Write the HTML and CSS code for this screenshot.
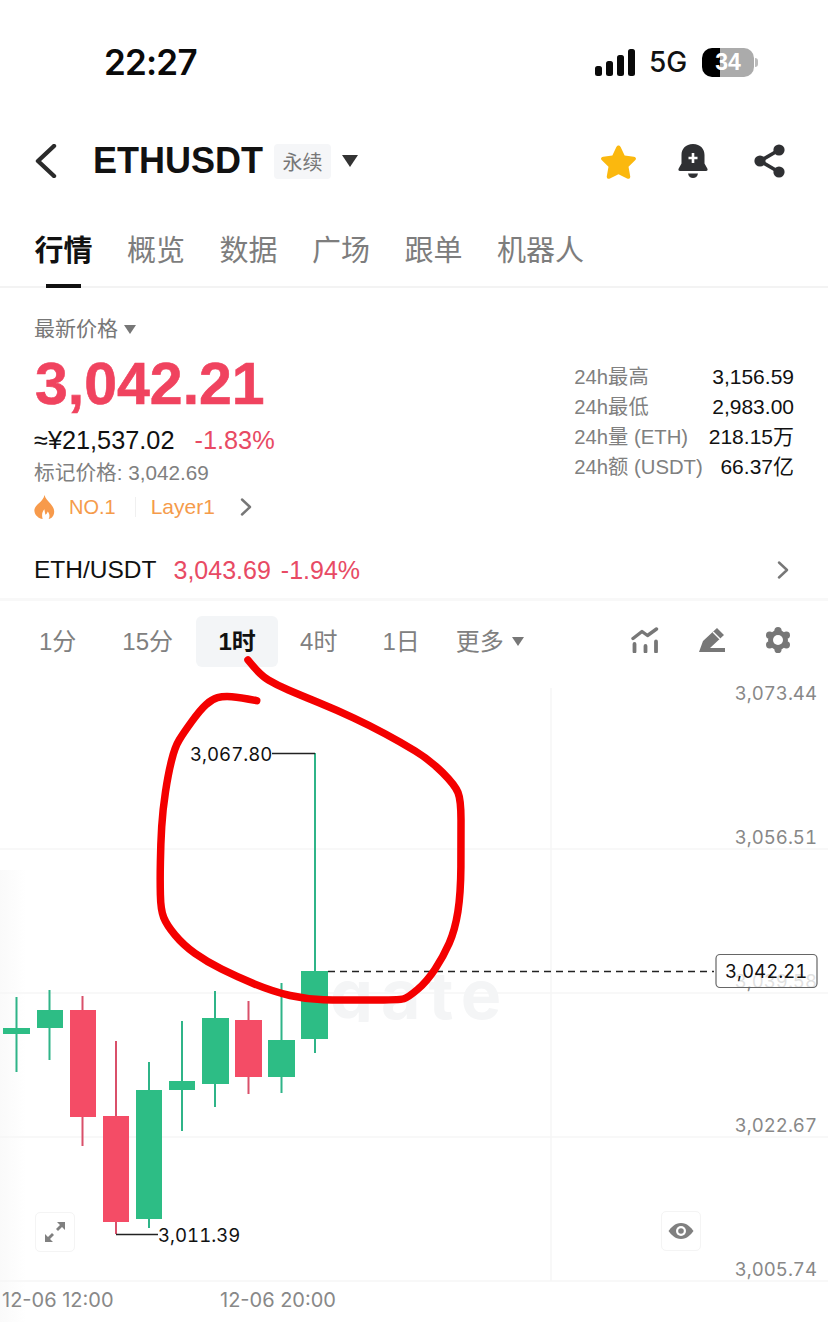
FILE: index.html
```html
<!DOCTYPE html>
<html lang="zh-CN">
<head>
<meta charset="utf-8">
<title>ETHUSDT</title>
<link rel="stylesheet" href="styles.css">
</head>
<body>
<div class="page">
  <header class="status">
    <span class="time">22:27</span>
    <div class="status-right">
      <svg class="signal" viewBox="0 0 41 27" width="41" height="27"><rect x="0" y="17" width="7" height="10" rx="2.5"/><rect x="11" y="12" width="7" height="15" rx="2.5"/><rect x="22" y="6" width="7" height="21" rx="2.5"/><rect x="33" y="0" width="7" height="27" rx="2.5"/></svg>
      <span class="net">5G</span>
      <span class="battery">34</span>
      <span class="nub"></span>
    </div>
  </header>

  <nav class="topbar">
    <svg class="back" viewBox="0 0 24 34" width="24" height="34"><path d="M20 2 4 17l16 15" fill="none" stroke="#2b2b2b" stroke-width="4.4" stroke-linecap="round" stroke-linejoin="round"/></svg>
    <h1 class="symbol">ETHUSDT</h1>
    <span class="pill">永续</span>
    <svg class="caret-dark" viewBox="0 0 16 12" width="16" height="12"><path d="M0 0h16L8 12z" fill="#333"/></svg>
    <div class="top-icons">
      <svg viewBox="0 0 38 36" width="37" height="35"><path d="M19 1.500c1 0 1.700.6 2.200 1.700l4.100 8.700 9.400 1.300c2.300.3 3 2 1.400 3.600l-6.800 6.700 1.700 9.500c.4 2.200-1.200 3.400-3.200 2.400L19 31.200l-8.800 4.200c-2 1-3.600-.2-3.200-2.400l1.700-9.500-6.800-6.700c-1.600-1.600-.9-3.300 1.400-3.600l9.400-1.300 4.100-8.700C17.300 2.100 18 1.500 19 1.500z" fill="#fbb80e"/></svg>
      <svg viewBox="0 0 30 36" width="30" height="36"><path d="M15 1c7.500 0 11.500 5 11.500 11v8.500l2.800 5c.7 1.200.2 2.500-1.300 2.500H2C.5 28-.0 26.700.7 25.500l2.800-5V12C3.500 6 7.500 1 15 1z" fill="#2f3033"/><path d="M10 30.500h10c-.5 3-2.500 4.500-5 4.500s-4.500-1.500-5-4.500z" fill="#2f3033"/><path d="M15 10v10M10.500 15h9" stroke="#fff" stroke-width="2.600" fill="none"/></svg>
      <svg class="share" viewBox="0 0 34 34" width="34" height="34"><path d="M26 6 7 17l19 11" stroke="#2f3033" stroke-width="3.600" fill="none"/><circle cx="26" cy="6" r="5.600" fill="#2f3033"/><circle cx="7" cy="17" r="5.600" fill="#2f3033"/><circle cx="26" cy="28" r="5.600" fill="#2f3033"/></svg>
    </div>
  </nav>

  <div class="tabs">
    <span class="tab tab-active">行情</span>
    <span class="tab">概览</span>
    <span class="tab">数据</span>
    <span class="tab">广场</span>
    <span class="tab">跟单</span>
    <span class="tab">机器人</span>
  </div>

  <section class="summary">
    <div class="summary-left">
      <div class="latest">最新价格<svg viewBox="0 0 12 9" width="12" height="9"><path d="M0 0h12L6 9z" fill="#777"/></svg></div>
      <div class="price">3,042.21</div>
      <div class="fiat"><span>≈¥21,537.02</span><span class="down">-1.83%</span></div>
      <div class="mark">标记价格: 3,042.69</div>
      <div class="tags">
        <svg viewBox="0 0 22 26" width="21" height="24"><path d="M11 0c1 4 3.500 6 6.500 9.500 2.800 3.300 4 6 4 8.500 0 4.500-3 8-6 8 1.500-2.500 1-5.500-1-8-.7 2-1.500 3-2.500 3.500-.5-2-1-4.500-1-6-2 2-3.500 5-2 10.500-4-.5-9-4-9-9.500C.5 10 9.500 8 11 0z" fill="#f79a4b"/></svg>
        <span class="tag-no">NO.1</span>
        <span class="tag-sep"></span>
        <span class="tag-name">Layer1</span>
        <svg class="tag-chevron" viewBox="0 0 12 18" width="12" height="18"><path d="M2 1.500 10 9l-8 7.500" fill="none" stroke="#777" stroke-width="2.400" stroke-linecap="round" stroke-linejoin="round"/></svg>
      </div>
    </div>
    <dl class="stats">
      <dt>24h最高</dt><dd>3,156.59</dd>
      <dt>24h最低</dt><dd>2,983.00</dd>
      <dt>24h量 (ETH)</dt><dd>218.15万</dd>
      <dt>24h额 (USDT)</dt><dd>66.37亿</dd>
    </dl>
  </section>

  <div class="spot">
    <span class="spot-name">ETH/USDT</span>
    <span class="spot-price">3,043.69</span>
    <span class="spot-price">-1.94%</span>
    <svg class="spot-chevron" viewBox="0 0 12 18" width="12" height="18"><path d="M2 1.500 10 9l-8 7.500" fill="none" stroke="#777" stroke-width="2.400" stroke-linecap="round" stroke-linejoin="round"/></svg>
  </div>

  <div class="intervals">
    <span class="iv iv-1">1分</span>
    <span class="iv iv-2">15分</span>
    <span class="iv iv-active">1时</span>
    <span class="iv iv-3">4时</span>
    <span class="iv iv-4">1日</span>
    <span class="iv iv-more">更多<svg viewBox="0 0 12 9" width="12" height="9"><path d="M0 0h12L6 9z" fill="#777"/></svg></span>
    <div class="tools">
      <svg viewBox="0 0 28 26" width="28" height="26"><path d="M2 11.500 11 4.500l5.500 4L25.500 2" fill="none" stroke="#777" stroke-width="3.400" stroke-linecap="round" stroke-linejoin="round"/><path d="M3.500 17v7.500M14.500 19v5.500M25 14.500v10" stroke="#777" stroke-width="3.800" stroke-linecap="round" fill="none"/></svg>
      <svg viewBox="0 0 28 26" width="28" height="26"><path d="M1 25 5 14 19 1l7 7-14 13h15v4z" fill="#777"/><path d="M15 5l7 7" stroke="#fff" stroke-width="1.400" fill="none"/></svg>
      <svg viewBox="0 0 26 26" width="26" height="26"><circle cx="13" cy="13" r="10" fill="#777"/><g fill="#777"><circle cx="13" cy="3.600" r="3.600"/><circle cx="21.400" cy="8.200" r="3.600"/><circle cx="21.400" cy="17.800" r="3.600"/><circle cx="13" cy="22.400" r="3.600"/><circle cx="4.600" cy="17.800" r="3.600"/><circle cx="4.600" cy="8.200" r="3.600"/></g><circle cx="13" cy="13" r="5" fill="#fff"/></svg>
    </div>
  </div>

  <section class="chart">
    <svg class="chart-canvas" viewBox="0 680 828 642" width="828" height="642">
      <defs>
        <linearGradient id="edge" x1="0" x2="1" y1="0" y2="0"><stop offset="0" stop-color="#fafafa"/><stop offset="1" stop-color="#fff"/></linearGradient>
        <clipPath id="mark-clip"><rect x="320" y="975" width="200" height="47"/></clipPath>
      </defs>
      <rect x="0" y="870" width="26" height="452" fill="url(#edge)"/>
      <g class="grid">
        <path d="M0 849H828M0 993H828M0 1137H828M0 1281H828M551 688V1281"/>
      </g>
      <g clip-path="url(#mark-clip)"><text class="watermark" x="330" y="1019">gate</text></g>

      <g class="up">
        <path class="wick" d="M16.500 997V1072M49.500 990V1060M149 1062V1228M182 1021V1131M215 991V1107M281.500 983V1093M315 753V1053"/>
        <rect x="3" y="1028" width="27" height="6"/>
        <rect x="37" y="1010" width="26" height="18"/>
        <rect x="136" y="1090" width="26" height="129"/>
        <rect x="169" y="1081" width="26" height="9"/>
        <rect x="202" y="1018" width="27" height="66"/>
        <rect x="268" y="1040" width="27" height="37"/>
        <rect x="301" y="971" width="27" height="68"/>
      </g>
      <g class="dn">
        <path class="wick" d="M82.500 996V1146M116 1041V1234M248.500 1001V1094"/>
        <rect x="70" y="1010" width="26" height="107"/>
        <rect x="103" y="1116" width="26" height="106"/>
        <rect x="235" y="1020" width="27" height="57"/>
      </g>

      <path class="lead" d="M272 753.500H315M116 1234.500H158"/>
      <text class="extreme" x="190" y="761">3,067.80</text>
      <text class="extreme" x="158" y="1242">3,011.39</text>

      <text class="axis" x="817" y="700">3,073.44</text>
      <text class="axis" x="817" y="844">3,056.51</text>
      <text class="axis" x="817" y="988">3,039.58</text>
      <text class="axis" x="817" y="1132">3,022.67</text>
      <text class="axis" x="817" y="1276">3,005.74</text>

      <path class="dash" d="M328 971.500H714"/>
      <rect class="tag" x="716" y="954.500" width="101" height="33" rx="4"/>
      <text class="tag-text" x="725" y="978">3,042.21</text>

      <text class="xlabel" x="2" y="1307">12-06 12:00</text>
      <text class="xlabel" x="220" y="1307">12-06 20:00</text>

      <path class="scribble" d="M256.700 700.700Q240 697.300 231.700 696.700Q223.300 696 217.500 697.700Q211.700 699.300 205.900 704.700Q200 710 191.700 721.700Q183.300 733.300 179.200 740Q175 746.700 171.700 760Q168.300 773.300 165.500 791.700Q162.700 810 161.700 826.700Q160.700 843.300 160.400 861.700Q160 880 160.400 895Q160.700 910 163.700 917.500Q166.700 925 175 935Q183.300 945 195 953.400Q206.700 961.700 221.700 969.200Q236.700 976.700 255 984.200Q273.300 991.700 290 995.500Q306.700 999.300 323.400 999.700Q340 1000 370 1000Q400 1000 404 998.700Q408.300 997.300 417.500 989.500Q426.700 981.700 435 969.200Q443.300 956.700 449.200 943.300Q455 930 457.900 911.700Q460.700 893.300 460.900 866.700Q461 840 461 820Q461 800 458 792.500Q455 785 442.500 772.500Q430 760 415 750.900Q400 741.700 385 733.700Q370 725.700 353.400 717.900Q336.700 710 318.400 702.500Q300 695 288.400 690Q276.700 685 268.400 680Q260 675 248 660"/>
    </svg>
    <button class="chart-btn btn-expand" type="button" aria-label="expand">
      <svg viewBox="0 0 22 22" width="22" height="22"><path d="M13 1h8v8l-3-3-4 4-2-2 4-4zM9 21H1v-8l3 3 4-4 2 2-4 4z" fill="#808080"/></svg>
    </button>
    <button class="chart-btn btn-eye" type="button" aria-label="eye">
      <svg viewBox="0 0 26 18" width="26" height="18"><path d="M13 1c6 0 10 4.500 12.500 8C23 12.500 19 17 13 17S3 12.500.5 9C3 5.500 7 1 13 1z" fill="#808080"/><circle cx="13" cy="9" r="5" fill="#fff"/><circle cx="13" cy="9" r="2.800" fill="#808080"/></svg>
    </button>
  </section>
</div>
</body>
</html>
```
FILE: styles.css
```css
* { box-sizing: border-box; }
html, body { margin: 0; padding: 0; background: #fff; }
body { font-family: "Liberation Sans", "Noto Sans CJK SC", sans-serif; color: #111; }
.page { width: 828px; height: 1322px; overflow: hidden; display: flex; flex-direction: column; }

.status { height: 122px; display: flex; align-items: center; justify-content: space-between; padding: 2px 70px 0 104px; }
.time { font-size: 35px; font-weight: 600; font-family: Inter, sans-serif; letter-spacing: -0.8px; width: 94px; white-space: nowrap; color: #0a0a0a; }
.status-right { display: flex; align-items: center; }
.signal { fill: #0a0a0a; }
.net { margin-left: 13px; font-size: 28px; font-family: Inter, sans-serif; font-weight: 500; width: 40px; white-space: nowrap; }
.battery { margin-left: 13px; width: 52px; height: 29px; border-radius: 10px; background: linear-gradient(90deg, #000 35%, #ababab 35%); color: #fff; font-size: 23px; font-weight: 700; display: flex; align-items: center; justify-content: center; }
.nub { width: 3px; height: 9px; margin-left: 1px; border-radius: 0 3px 3px 0; background: #bbb; }

.topbar { height: 78px; display: flex; align-items: center; padding: 0 41px 0 34px; }
.back { flex: none; }
.symbol { margin: 0 0 0 35px; font-size: 36px; line-height: 40px; font-weight: 700; color: #111; }
.pill { margin-left: 11px; width: 57px; height: 35px; background: #f5f6f8; border-radius: 4px; color: #777; font-size: 20px; display: flex; align-items: center; justify-content: center; }
.caret-dark { margin-left: 11px; }
.top-icons { margin-left: auto; display: flex; align-items: center; gap: 41px; }
.share { margin-left: 4px; }

.tabs { height: 88px; display: flex; align-items: flex-start; gap: 34.5px; padding: 30px 0 0 34.5px; border-bottom: 2px solid #f3f3f3; }
.tab { position: relative; font-size: 29px; line-height: 42px; color: #7d7d7d; white-space: nowrap; }
.tab-active { color: #111; font-weight: 700; }
.tab-active::after { content: ""; position: absolute; left: 11px; right: 12px; top: 54px; height: 4px; background: #111; }

.summary { height: 240px; display: flex; justify-content: space-between; padding: 28px 34px 0 34px; }
.summary-left { display: flex; flex-direction: column; }
.latest { font-size: 21px; line-height: 26px; color: #777; display: flex; align-items: center; gap: 6px; }
.price { margin: 11px 0 0 1px; font-size: 59px; line-height: 62px; font-weight: 700; color: #f0435f; -webkit-text-stroke: 0.6px #f0435f; }
.fiat { margin-top: 11px; font-size: 25.300px; line-height: 28px; display: flex; gap: 20px; color: #111; }
.down { color: #e84a64; }
.mark { margin-top: 6px; font-size: 20.7px; line-height: 26px; color: #808080; }
.tags { margin-top: 6px; height: 30px; display: flex; align-items: center; font-size: 20px; color: #f59b4b; }
.tag-no { margin-left: 14px; }
.tag-sep { margin: 0 15px 0 19px; width: 1px; height: 20px; background: #f0f0f0; }
.tag-name { font-size: 21px; }
.tag-chevron { margin-left: 25px; }

.stats { margin: 46px 0 0; display: grid; grid-template-columns: auto auto; grid-auto-rows: 30px; column-gap: 6px; align-content: start; line-height: 30px; }
.stats dt { font-size: 20.3px; color: #808080; white-space: nowrap; }
.stats dd { margin: 0; font-size: 21px; text-align: right; color: #111; white-space: nowrap; }

.spot { height: 70px; display: flex; align-items: center; padding: 14px 39px 0 34px; font-size: 25px; }
.spot-name { font-size: 24.5px; color: #111; margin-right: 17px; }
.spot-price { color: #e84a64; margin-right: 10px; }
.spot-chevron { margin-left: auto; }

.intervals { height: 82px; border-top: 3px solid #f8f8f8; display: flex; align-items: flex-start; padding-top: 15px; font-size: 24px; color: #808080; }
.iv { height: 51px; line-height: 52px; white-space: nowrap; }
.iv-1 { margin-left: 39px; }
.iv-2 { margin-left: 46px; }
.iv-active { margin-left: 23px; width: 82px; background: #f3f5f7; border-radius: 6px; color: #111; font-weight: 700; text-align: center; }
.iv-3 { margin-left: 22px; }
.iv-4 { margin-left: 45px; }
.iv-more { margin-left: 36px; display: flex; align-items: center; gap: 8px; }
.tools { margin-left: auto; padding: 11px 37px 0 0; display: flex; gap: 39px; }

.chart { flex: 1; position: relative; }
.chart-canvas { display: block; overflow: visible; font-family: Inter, sans-serif; font-variant-numeric: tabular-nums; }
.grid path { stroke: #f6f6f6; stroke-width: 1.500; fill: none; }
.watermark { font-size: 68px; font-weight: 700; fill: #f4f5f6; letter-spacing: 8px; }
.wick { fill: none; stroke-width: 2; }
.up rect { fill: #2dbd85; }
.up .wick { stroke: #2fb488; }
.dn rect { fill: #f44c66; }
.dn .wick { stroke: #d9506a; }
.lead { stroke: #222; stroke-width: 1.500; fill: none; }
.extreme { font-size: 18.600px; fill: #111; }
.axis { font-size: 18.600px; fill: #888; text-anchor: end; }
.dash { stroke: #222; stroke-width: 1.300; stroke-dasharray: 7 5; fill: none; }
.tag { fill: #fff; fill-opacity: 0.75; stroke: #666; stroke-width: 1.200; }
.tag-text { font-size: 18.600px; fill: #111; }
.xlabel { font-size: 20px; fill: #888; font-variant-numeric: normal; }
.scribble { fill: none; stroke: #f40000; stroke-width: 7.500; stroke-linecap: round; stroke-linejoin: round; }

.chart-btn { position: absolute; width: 40px; height: 40px; padding: 0; background: #fff; border: 1.500px solid #f4f4f4; border-radius: 5px; display: flex; align-items: center; justify-content: center; }
.btn-expand { left: 35px; top: 532px; }
.btn-eye { left: 661px; top: 531px; }
```
